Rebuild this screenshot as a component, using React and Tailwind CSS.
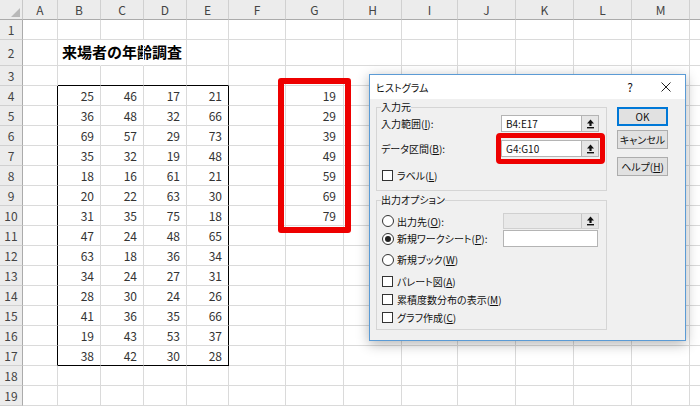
import React from 'react';

const cols = [
  ['A', 'w-[35px]'],
  ['B', 'w-[43px]'],
  ['C', 'w-[43px]'],
  ['D', 'w-[43px]'],
  ['E', 'w-[42px]'],
  ['F', 'w-[57px]'],
  ['G', 'w-[58px]'],
  ['H', 'w-[58px]'],
  ['I', 'w-[56px]'],
  ['J', 'w-[58px]'],
  ['K', 'w-[58px]'],
  ['L', 'w-[58px]'],
  ['M', 'w-[58px]'],
  ['', 'w-[58px]'],
];

const ages = [
  [25, 46, 17, 21],
  [36, 48, 32, 66],
  [69, 57, 29, 73],
  [35, 32, 19, 48],
  [18, 16, 61, 21],
  [20, 22, 63, 30],
  [31, 35, 75, 18],
  [47, 24, 48, 65],
  [63, 18, 36, 34],
  [34, 24, 27, 31],
  [28, 30, 24, 26],
  [41, 36, 35, 66],
  [19, 43, 53, 37],
  [38, 42, 30, 28],
];

const bins = [19, 29, 39, 49, 59, 69, 79];
const rows = Array.from({ length: 19 }, (_, i) => i + 1);

function Cell({ r, c, w }) {
  const inBlock = r >= 4 && r <= 17;
  const rightBlack = inBlock && (c === 0 || c === 4);
  const rightHidden = r === 2 && (c === 1 || c === 2);
  const bottomBlack = c >= 1 && c <= 4 && (r === 3 || r === 17);

  let right = 'border-r-[#dadada]';
  if (rightBlack) right = 'border-r-black';
  if (rightHidden) right = 'border-r-white';
  const bottom = bottomBlack ? 'border-b-black' : 'border-b-[#dadada]';

  let content = null;
  let align = 'justify-end pr-[6px]';
  if (inBlock && c >= 1 && c <= 4) content = ages[r - 4][c - 1];
  if (c === 6 && r >= 4 && r <= 10) {
    content = bins[r - 4];
    align = 'justify-end pr-[7px]';
  }
  if (r === 2 && c === 1) {
    content = <span className="text-[15px] font-bold text-black whitespace-nowrap">来場者の年齢調査</span>;
    align = 'justify-start pl-[4px] overflow-visible';
  }

  return (
    <div className={`${w} shrink-0 flex items-center border-r border-b ${right} ${bottom} ${align} text-[12px] text-[#333]`}>
      {content}
    </div>
  );
}

function Sheet() {
  return (
    <div className="flex flex-col">
      <div className="flex h-[20px] shrink-0">
        <div className="w-[23px] shrink-0 flex items-end justify-end pr-[2px] pb-[2px] bg-[#ececec] border-r border-b border-r-[#c8c8c8] border-b-[#ababab]">
          <svg width="9" height="9" viewBox="0 0 9 9">
            <polygon points="9,0 9,9 0,9" fill="#b9b9b9" />
          </svg>
        </div>
        {cols.map(([k, w], i) => (
          <div
            key={i}
            className={`${w} shrink-0 flex items-center justify-center bg-[#ececec] border-r border-b border-r-[#d0d0d0] border-b-[#ababab] text-[12px] text-[#444]`}
          >
            {k}
          </div>
        ))}
      </div>
      {rows.map((r) => (
        <div key={r} className={`flex shrink-0 ${r === 2 ? 'h-[26px]' : 'h-[20px]'}`}>
          <div className="w-[23px] shrink-0 flex items-center justify-center bg-[#ececec] border-r border-b border-r-[#ababab] border-b-[#d0d0d0] text-[12px] text-[#444]">
            {r}
          </div>
          {cols.map(([k, w], c) => (
            <Cell key={c} r={r} c={c} w={w} />
          ))}
        </div>
      ))}
    </div>
  );
}

function PickIcon() {
  return (
    <svg width="9" height="10" viewBox="0 0 9 10">
      <path d="M4.5 0.5 L8 4.5 H5.6 V7 H3.4 V4.5 H1 Z" fill="#111" />
      <rect x="1" y="8" width="7" height="1.4" fill="#111" />
    </svg>
  );
}

function RefBox({ value }) {
  return (
    <div className="flex w-[98px] h-[17px] border border-[#b4b4b4]">
      <div className="flex-1 flex items-center pl-[4px] text-[10px] bg-white">{value}</div>
      <div className="w-[17px] flex items-center justify-center bg-[#e6e6e6] border-l border-[#b4b4b4]">
        <PickIcon />
      </div>
    </div>
  );
}

function Check({ children }) {
  return (
    <div className="flex items-center h-[17px]">
      <span className="w-[11px] h-[11px] ml-[1px] border border-[#333] bg-white" />
      <span className="ml-[4px]">{children}</span>
    </div>
  );
}

function Radio({ checked, children }) {
  return (
    <div className="flex items-center">
      <span className="w-[12px] h-[12px] ml-[1px] rounded-full border border-[#333] bg-white flex items-center justify-center">
        {checked && <span className="w-[6px] h-[6px] rounded-full bg-[#222]" />}
      </span>
      <span className="ml-[3px]">{children}</span>
    </div>
  );
}

function Button({ primary, children }) {
  return (
    <div
      className={`h-[19px] flex items-center justify-center bg-[#e1e1e1] ${
        primary ? 'border-2 border-[#0078d7]' : 'border border-[#adadad]'
      }`}
    >
      {children}
    </div>
  );
}

function Dialog() {
  return (
    <div className="absolute left-[369px] top-[74px] w-[317px] h-[267px] flex flex-col border border-[#5b9bd5] bg-[#f0f0f0] shadow-[0_3px_12px_rgba(0,0,0,0.3)] text-[10px] text-[#111] [font-feature-settings:'palt']">
      <div className="flex items-center h-[24px] shrink-0 bg-white pl-[6px]">
        <span>ヒストグラム</span>
        <span className="ml-auto w-[20px] text-center text-[12px] leading-none">?</span>
        <span className="ml-[16px] mr-[9px] w-[20px] flex justify-center">
          <svg width="10" height="10" viewBox="0 0 10 10">
            <path d="M0.5 0.5 L9.5 9.5 M9.5 0.5 L0.5 9.5" stroke="#222" strokeWidth="1" />
          </svg>
        </span>
      </div>

      <div className="flex pl-[6px]">
        <div className="w-[231px] flex flex-col">
          <fieldset className="border border-[#d5d5d5] pl-[4px] pb-[6px]">
            <legend className="leading-[16px]">入力元</legend>
            <div className="flex items-center h-[17px]">
              <span className="w-[120px]">
                入力範囲(<span className="underline">I</span>):
              </span>
              <RefBox value="B4:E17" />
            </div>
            <div className="flex items-center h-[17px] mt-[8px]">
              <span className="w-[120px]">
                データ区間(<span className="underline">B</span>):
              </span>
              <div className="relative">
                <RefBox value="G4:G10" />
                <div className="absolute -left-[5px] -right-[6px] -top-[7px] -bottom-[7px] border-[5px] border-[#ee0000] rounded-[4px]" />
              </div>
            </div>
            <div className="mt-[10px]">
              <Check>
                ラベル(<span className="underline">L</span>)
              </Check>
            </div>
          </fieldset>

          <fieldset className="mt-[1px] border border-[#d5d5d5] pl-[4px] pb-[3px]">
            <legend className="leading-[16px]">出力オプション</legend>
            <div className="flex items-center h-[16px] mt-[5px]">
              <div className="w-[122px]">
                <Radio>
                  出力先(<span className="underline">O</span>):
                </Radio>
              </div>
              <div className="flex w-[96px] h-[16px] border border-[#d0d0d0]">
                <div className="flex-1 bg-[#e9e9e9]" />
                <div className="w-[17px] flex items-center justify-center bg-[#e6e6e6] border-l border-[#c4c4c4]">
                  <PickIcon />
                </div>
              </div>
            </div>
            <div className="flex items-center h-[17px] mt-[1px]">
              <div className="w-[122px]">
                <Radio checked>
                  新規ワークシート(<span className="underline">P</span>):
                </Radio>
              </div>
              <div className="w-[95px] h-[17px] bg-white border border-[#b4b4b4]" />
            </div>
            <div className="flex items-center h-[17px] mt-[4px]">
              <Radio>
                新規ブック(<span className="underline">W</span>)
              </Radio>
            </div>
            <div className="mt-[5px]">
              <Check>
                パレート図(<span className="underline">A</span>)
              </Check>
            </div>
            <div className="mt-[1px]">
              <Check>
                累積度数分布の表示(<span className="underline">M</span>)
              </Check>
            </div>
            <div className="mt-[1px]">
              <Check>
                グラフ作成(<span className="underline">C</span>)
              </Check>
            </div>
          </fieldset>
        </div>

        <div className="ml-[10px] pt-[8px] w-[51px] flex flex-col">
          <Button primary>OK</Button>
          <div className="mt-[4px]">
            <Button>キャンセル</Button>
          </div>
          <div className="mt-[8px]">
            <Button>
              ヘルプ(<span className="underline">H</span>)
            </Button>
          </div>
        </div>
      </div>
    </div>
  );
}

export default function App() {
  return (
    <div className="relative w-[700px] h-[406px] overflow-hidden bg-white font-['Noto_Sans_CJK_JP',sans-serif]">
      <Sheet />
      <div className="absolute left-[278px] top-[78px] w-[73px] h-[155px] border-[6px] border-[#ee0000] rounded-[3px]" />
      <Dialog />
    </div>
  );
}
